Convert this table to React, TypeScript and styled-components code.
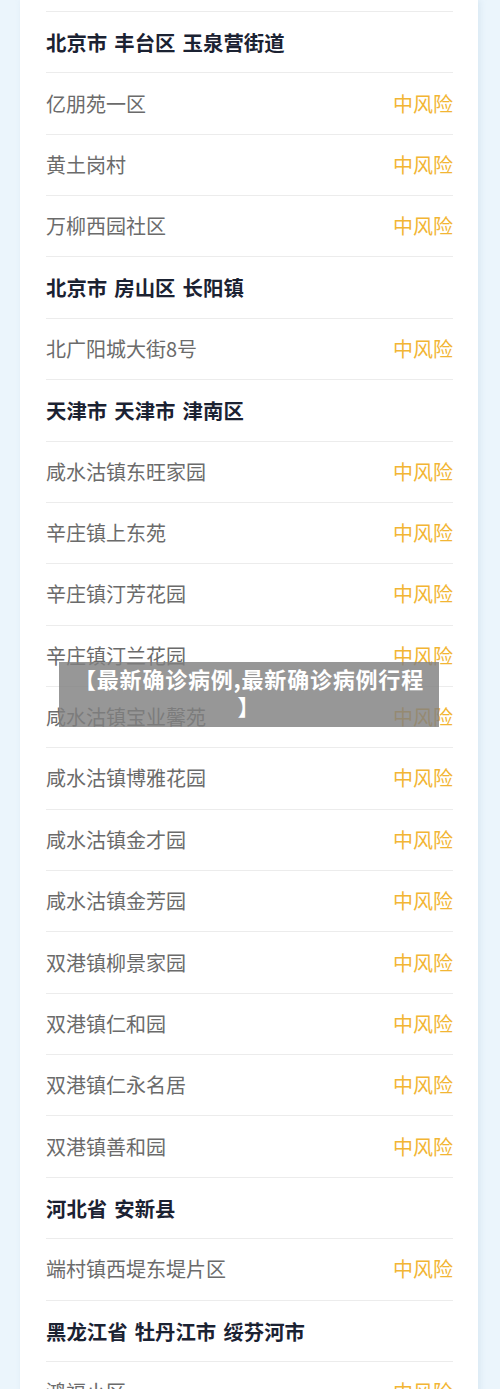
import React from "react";
import styled, { createGlobalStyle } from "styled-components";

const Global = createGlobalStyle`
  html, body {
    margin: 0;
    padding: 0;
    background: #ebf5fc;
    height: 1389px;
    overflow: hidden;
  }
  * { box-sizing: border-box; }
`;

const Page = styled.div`
  position: relative;
  width: 500px;
  height: 1389px;
  overflow: hidden;
  background: #ebf5fc;
  font-family: "Noto Sans CJK SC", "Noto Sans", sans-serif;
`;

const Card = styled.div`
  margin-left: 20px;
  width: 458px;
  min-height: 1389px;
  background: #ffffff;
  padding: 11px 25px 0 26px;
  box-shadow: 2px 0 6px rgba(180, 205, 225, 0.35);
`;

const Row = styled.div`
  height: 61.36px;
  border-top: 1px solid #ececec;
  display: flex;
  align-items: center;
  justify-content: space-between;
  font-size: 20px;
  line-height: 1;
`;

const Name = styled.span<{ $heading?: boolean }>`
  color: ${(p) => (p.$heading ? "#1b2232" : "#6b6b6b")};
  font-weight: ${(p) => (p.$heading ? 700 : 400)};
  font-size: ${(p) => (p.$heading ? "20.4px" : "20px")};
  word-spacing: ${(p) => (p.$heading ? "2.5px" : "0")};
`;

const Risk = styled.span`
  color: #f2b534;
  font-weight: 400;
`;

const Overlay = styled.div`
  position: absolute;
  left: 59px;
  top: 662px;
  width: 380px;
  height: 65px;
  background: rgba(128, 128, 128, 0.82);
  color: #ffffff;
  font-weight: 700;
  font-size: 22px;
  letter-spacing: 0.8px;
  line-height: 27px;
  text-align: center;
  padding: 3px 6px 0;
`;

type Item = { name: string; heading?: boolean };

const items: Item[] = [
  { name: "北京市 丰台区 玉泉营街道", heading: true },
  { name: "亿朋苑一区" },
  { name: "黄土岗村" },
  { name: "万柳西园社区" },
  { name: "北京市 房山区 长阳镇", heading: true },
  { name: "北广阳城大街8号" },
  { name: "天津市 天津市 津南区", heading: true },
  { name: "咸水沽镇东旺家园" },
  { name: "辛庄镇上东苑" },
  { name: "辛庄镇汀芳花园" },
  { name: "辛庄镇汀兰花园" },
  { name: "咸水沽镇宝业馨苑" },
  { name: "咸水沽镇博雅花园" },
  { name: "咸水沽镇金才园" },
  { name: "咸水沽镇金芳园" },
  { name: "双港镇柳景家园" },
  { name: "双港镇仁和园" },
  { name: "双港镇仁永名居" },
  { name: "双港镇善和园" },
  { name: "河北省 安新县", heading: true },
  { name: "端村镇西堤东堤片区" },
  { name: "黑龙江省 牡丹江市 绥芬河市", heading: true },
  { name: "鸿福小区" },
];

export default function App() {
  return (
    <Page>
      <Global />
      <Card>
        {items.map((it, i) => (
          <Row key={i}>
            <Name $heading={it.heading}>{it.name}</Name>
            {!it.heading && <Risk>中风险</Risk>}
          </Row>
        ))}
      </Card>
      <Overlay>
        【最新确诊病例,最新确诊病例行程
        <br />】
      </Overlay>
    </Page>
  );
}
